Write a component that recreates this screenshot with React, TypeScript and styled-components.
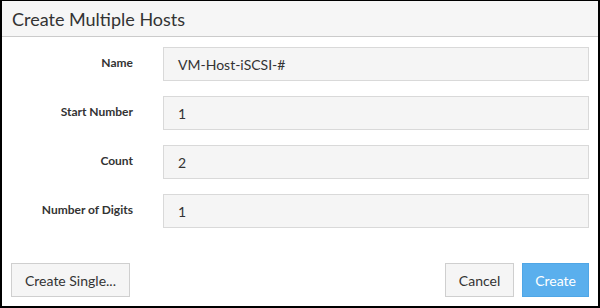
import styled, { createGlobalStyle } from 'styled-components'

const Global = createGlobalStyle`
  body {
    margin: 0;
    background: #fff;
    font-family: Lato, "Open Sans", "Liberation Sans", sans-serif;
  }
`

const Dialog = styled.div`
  width: 600px;
  height: 308px;
  box-sizing: border-box;
  border: 2px solid #000;
  border-top-width: 1px;
  display: flex;
  flex-direction: column;
  background: #fff;
`

const Header = styled.div`
  height: 35px;
  background: #f6f6f6;
  border-bottom: 1px solid #cbcbcb;
  display: flex;
  align-items: center;
  padding-left: 10px;
`

const Title = styled.h1`
  margin: 0;
  font-size: 18px;
  font-weight: 400;
  color: #333;
`

const Form = styled.div`
  display: flex;
  flex-direction: column;
  gap: 15px;
  padding: 10px 9px 0 0;
`

const Row = styled.div`
  display: grid;
  grid-template-columns: 131px 1fr;
  column-gap: 30px;
  align-items: center;
`

const Label = styled.label`
  text-align: right;
  font-size: 12px;
  font-weight: 700;
  color: #333;
  margin-top: -4px;
`

const Input = styled.div`
  height: 34px;
  box-sizing: border-box;
  border: 1px solid #d9d9d9;
  background: #f5f5f5;
  padding: 0 14px;
  display: flex;
  align-items: center;
  font-size: 14px;
  color: #333;
`

const Footer = styled.div`
  margin-top: auto;
  display: flex;
  align-items: center;
  padding: 0 9px 9px 9px;
  gap: 8px;
`

const Spacer = styled.div`
  flex: 1;
`

const Button = styled.button<{ $primary?: boolean }>`
  height: 34px;
  box-sizing: border-box;
  padding: 0 ${p => (p.$primary ? 12 : 13)}px;
  font-family: inherit;
  font-size: 14px;
  border: 1px solid ${p => (p.$primary ? '#4fa6e6' : '#cfcfcf')};
  background: ${p => (p.$primary ? '#5aafed' : '#f5f5f5')};
  color: ${p => (p.$primary ? '#fff' : '#333')};
  border-radius: 0;
`

const fields = [
  { label: 'Name', value: 'VM-Host-iSCSI-#' },
  { label: 'Start Number', value: '1' },
  { label: 'Count', value: '2' },
  { label: 'Number of Digits', value: '1' },
]

export default function App() {
  return (
    <>
      <Global />
      <Dialog>
        <Header>
          <Title>Create Multiple Hosts</Title>
        </Header>
        <Form>
          {fields.map(f => (
            <Row key={f.label}>
              <Label>{f.label}</Label>
              <Input>{f.value}</Input>
            </Row>
          ))}
        </Form>
        <Footer>
          <Button>Create Single...</Button>
          <Spacer />
          <Button>Cancel</Button>
          <Button $primary>Create</Button>
        </Footer>
      </Dialog>
    </>
  )
}
